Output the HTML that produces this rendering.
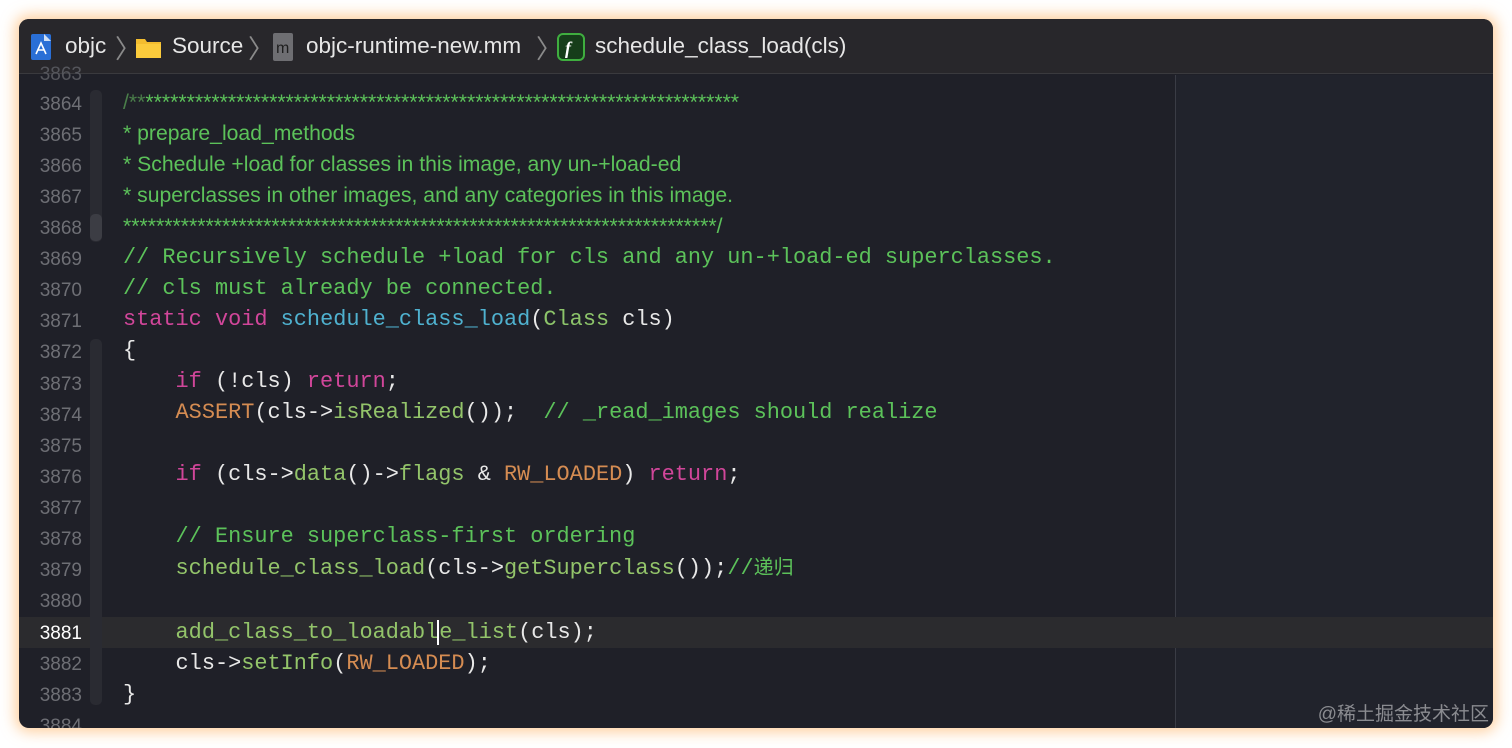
<!DOCTYPE html>
<html><head><meta charset="utf-8"><style>
*{margin:0;padding:0;box-sizing:border-box}
body{width:1512px;height:748px;background:#fff;position:relative;overflow:hidden;font-family:"Liberation Sans",sans-serif}
.win{position:absolute;left:19px;top:19px;width:1474px;height:709px;border-radius:10px;background:#1f2028;overflow:hidden;box-shadow:0 0 14px 4px rgba(255,170,80,.55)}
.hdr{position:absolute;left:0;top:0;width:100%;height:55px;background:#28272b;border-bottom:1px solid #3a3a3e;color:#e6e6e6;font-size:22.5px}
.hdr span{position:absolute;top:14px}
.chev{color:#8a8a8a;font-size:26px;top:10px!important}
.right{position:absolute;left:1156px;top:56px;right:0;bottom:0;background:#21232c;border-left:1px solid #3a3c45}
.hl{position:absolute;left:0;top:598px;width:100%;height:31px;background:#2b2b2e}
.ln{position:absolute;left:0;width:63px;text-align:right;color:#6e6f75;font-size:19px;line-height:24px;font-family:"Liberation Sans",sans-serif}
.code{position:absolute;left:104px;font-family:"Liberation Mono",monospace;font-size:21.9px;line-height:26px;color:#e8e8e8;white-space:pre}
.doc{position:absolute;left:104px;font-size:21.2px;line-height:26px;color:#5cc25a;white-space:pre}
.c{color:#5cc25a}.k{color:#d1469a}.f{color:#4fb1cf}.g{color:#93c46a}.o{color:#d58c52}.t{color:#8cc46a}
.fold{position:absolute;left:71px;width:12px;background:#2a2b32;border-radius:5px}
.wm{position:absolute;right:4px;bottom:2px;color:#8a8b90;font-size:19px;font-family:"Liberation Sans","Noto Sans CJK SC",sans-serif}
</style></head><body>
<div class="win">
<div class="right"></div>
<div class="hl"></div>
<div class="hdr">
<svg style="position:absolute;left:11px;top:14px" width="22" height="28"><rect x="1" y="1" width="20" height="26" rx="2" fill="#2a6fd6"/><path d="M14 1 L21 8 L14 8Z" fill="#cfe0f5"/><path d="M6 21 L11 10 L16 21 M8 17 H14" stroke="#fff" stroke-width="1.6" fill="none"/></svg>
<span style="left:46px">objc</span><span class="chev" style="left:96px">〉</span>
<svg style="position:absolute;left:116px;top:16px" width="27" height="24"><path d="M1 4 h9 l2 3 h14 v16 h-25z" fill="#f3bd2f"/><path d="M1 9 h25 v14 h-25z" fill="#fbcb3c"/></svg>
<span style="left:153px">Source</span><span class="chev" style="left:229px">〉</span>
<svg style="position:absolute;left:254px;top:14px" width="20" height="28"><rect width="20" height="28" rx="2" fill="#6e6e72"/><text x="3" y="20" font-size="16" fill="#1e1e1e" font-family="Liberation Sans">m</text></svg>
<span style="left:287px">objc-runtime-new.mm</span><span class="chev" style="left:517px">〉</span>
<svg style="position:absolute;left:538px;top:14px" width="28" height="28"><rect x="1" y="1" width="26" height="26" rx="5" fill="#163d1a" stroke="#3fae3f" stroke-width="2"/><text x="8" y="21" font-size="18" font-style="italic" font-weight="bold" fill="#fff" font-family="Liberation Serif">f</text></svg>
<span style="left:576px">schedule_class_load(cls)</span>
</div>
<div class="fold" style="top:71px;height:152px"></div>
<div class="fold" style="top:195px;height:27px;background:#3c3d44"></div>
<div class="fold" style="top:320px;height:366px"></div>
<div style="position:absolute;left:0;top:1px;width:100%;height:100%;">
<div class="ln" style="top:43px;color:#55565c">3863</div>
<div class="ln" style="top:73px">3864</div>
<div class="ln" style="top:104px">3865</div>
<div class="ln" style="top:135px">3866</div>
<div class="ln" style="top:166px">3867</div>
<div class="ln" style="top:197px">3868</div>
<div class="ln" style="top:228px">3869</div>
<div class="ln" style="top:259px">3870</div>
<div class="ln" style="top:290px">3871</div>
<div class="ln" style="top:321px">3872</div>
<div class="ln" style="top:353px">3873</div>
<div class="ln" style="top:384px">3874</div>
<div class="ln" style="top:415px">3875</div>
<div class="ln" style="top:446px">3876</div>
<div class="ln" style="top:477px">3877</div>
<div class="ln" style="top:508px">3878</div>
<div class="ln" style="top:539px">3879</div>
<div class="ln" style="top:570px">3880</div>
<div class="ln" style="top:602px;color:#fff">3881</div>
<div class="ln" style="top:633px">3882</div>
<div class="ln" style="top:664px">3883</div>
<div class="ln" style="top:695px">3884</div>
</div>
<div class="doc" style="top:71px"><span style="color:#4a7e4a">/**</span>************************************************************************</div>
<div class="doc" style="top:102px">* prepare_load_methods</div>
<div class="doc" style="top:133px">* Schedule +load for classes in this image, any un-+load-ed</div>
<div class="doc" style="top:164px">* superclasses in other images, and any categories in this image.</div>
<div class="doc" style="top:195px">************************************************************************/</div>
<div class="code" style="top:226px"><span class="c">// Recursively schedule +load for cls and any un-+load-ed superclasses.</span></div>
<div class="code" style="top:257px"><span class="c">// cls must already be connected.</span></div>
<div class="code" style="top:288px"><span class="k">static void</span> <span class="f">schedule_class_load</span>(<span class="t">Class</span> cls)</div>
<div class="code" style="top:319px">{</div>
<div class="code" style="top:350px">    <span class="k">if</span> (!cls) <span class="k">return</span>;</div>
<div class="code" style="top:381px">    <span class="o">ASSERT</span>(cls-&gt;<span class="g">isRealized</span>());  <span class="c">// _read_images should realize</span></div>
<div class="code" style="top:443px">    <span class="k">if</span> (cls-&gt;<span class="g">data</span>()-&gt;<span class="g">flags</span> &amp; <span class="o">RW_LOADED</span>) <span class="k">return</span>;</div>
<div class="code" style="top:505px">    <span class="c">// Ensure superclass-first ordering</span></div>
<div class="code" style="top:537px">    <span class="g">schedule_class_load</span>(cls-&gt;<span class="g">getSuperclass</span>());<span class="c">//<span style="font-family:'Noto Sans CJK SC',sans-serif;font-size:20px;line-height:20px">递归</span></span></div>
<div class="code" style="top:601px">    <span class="g">add_class_to_loadabl</span><span class="g" style="border-left:2px solid #fff;margin-left:-1px">e</span><span class="g">_list</span>(cls);</div>
<div class="code" style="top:632px">    cls-&gt;<span class="g">setInfo</span>(<span class="o">RW_LOADED</span>);</div>
<div class="code" style="top:663px">}</div>
<div class="wm">@稀土掘金技术社区</div>
</div>
</body></html>
